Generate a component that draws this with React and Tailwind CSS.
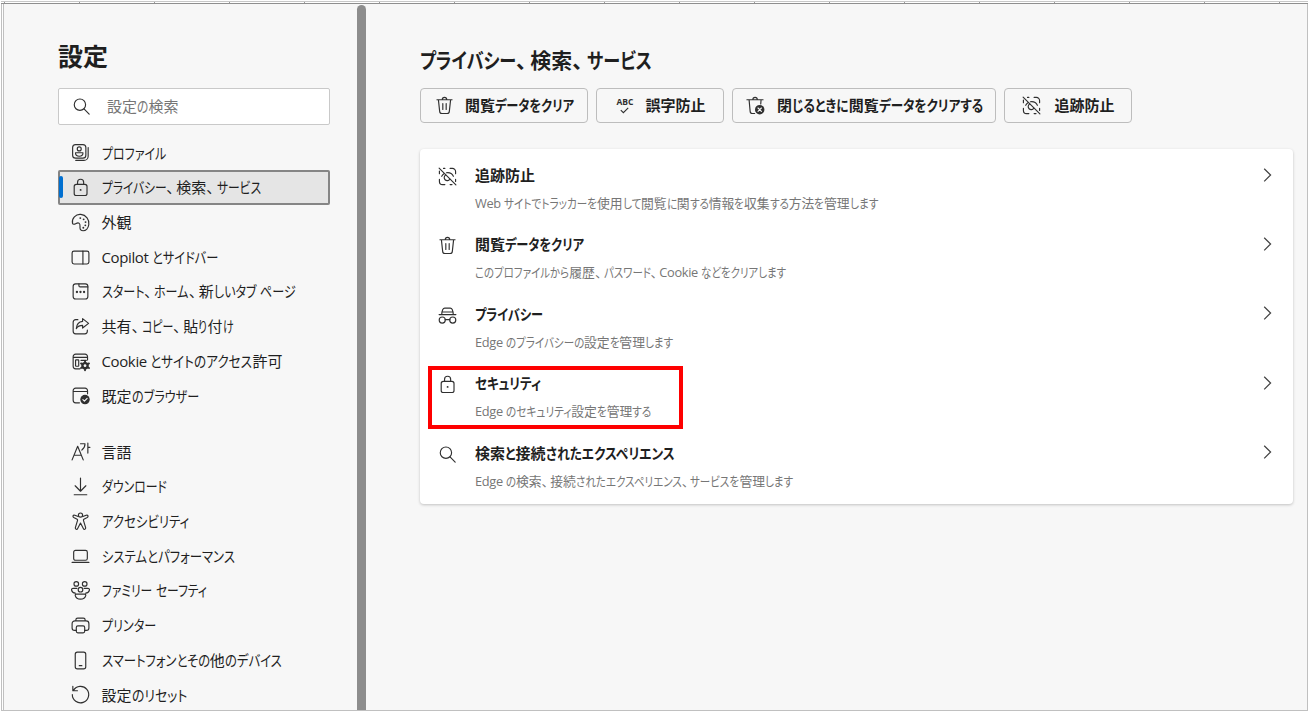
import { useLayoutEffect, useRef } from "react";

const iconPaths = {
    search: <><circle cx="8.5" cy="8.3" r="5.4" /><path d="M12.4 12.3 17.3 17.2" /></>,
    profile: (
        <>
            <rect x="2.5" y="2.5" width="12.6" height="12.8" rx="2.8" />
            <circle cx="8.8" cy="6.6" r="1.9" />
            <path d="M5.3 10.2h7c.4 2-1.2 3.4-3.5 3.4s-3.9-1.4-3.5-3.4zM17.3 5.2v8.3a4 4 0 0 1-4 4H5.5" />
        </>
    ),
    lock: (
        <>
            <rect x="4" y="7" width="12.2" height="10.6" rx="2" />
            <path d="M7.2 7V5a2.9 2.9 0 0 1 5.8 0v2" />
            <circle cx="10.1" cy="12.3" r=".9" fill="currentColor" stroke="none" />
        </>
    ),
    palette: (
        <>
            <path d="M2.4 10.8C1.4 6 5.5 1.8 10.3 2.3c5 .5 8.3 5 7.6 9.7-.5 3.3-2.7 5.900-5.4 5.900-2 0-3-1.300-3-3.100 0-1.700.5-3.300-.9-4.200-1.700-1-2.800.7-4.200 1-1 .2-1.800 0-2-.8z" />
            <g fill="currentColor" stroke="none">
                <circle cx="9.8" cy="5.8" r=".9" /><circle cx="13" cy="7" r=".9" /><circle cx="14.8" cy="9.6" r=".9" />
                <circle cx="14.6" cy="12.7" r=".9" /><circle cx="12.7" cy="15" r=".9" />
            </g>
        </>
    ),
    sidebar: <><rect x="2" y="4" width="16" height="12.2" rx="1.8" /><path d="M12.3 4v12.2" /></>,
    home: (
        <>
            <rect x="3" y="2.7" width="14" height="14.4" rx="2.4" />
            <path d="M8.5 2.8v1.7c0 .7.4 1.1 1.1 1.1H17" />
            <g fill="currentColor" stroke="none">
                <circle cx="6.6" cy="10.5" r="1.1" /><circle cx="10" cy="10.5" r="1.1" /><circle cx="13.4" cy="10.5" r="1.1" />
            </g>
        </>
    ),
    share: (
        <>
            <path d="M7.5 3.5H5.4A2.4 2.4 0 0 0 3 5.9v8.7A2.4 2.4 0 0 0 5.4 17h8.7a2.4 2.4 0 0 0 2.4-2.4v-1.3" />
            <path d="M12 2.5 17.7 7 12 11.5V9c-2.8 0-4.7 1-6 3 .3-3.8 2.4-6.600 6-6.900z" />
        </>
    ),
    cookie: (
        <>
            <path d="M9.5 17H5.4A2.4 2.4 0 0 1 3 14.6V5.4A2.4 2.4 0 0 1 5.4 3h8.9a2.4 2.4 0 0 1 2.4 2.4v3.200M3 6h13.7M10.5 9h5" />
            <rect x="5.3" y="8.5" width="3" height="6" rx=".5" />
            <circle cx="14.3" cy="14" r="2.6" strokeWidth="2" />
            <path strokeWidth="1.8" d="M14.3 9.6v8.8M10.5 11.8l7.6 4.4M10.5 16.2l7.6-4.4" />
            <circle cx="14.3" cy="14" r="1.3" fill="#f7f7f7" stroke="none" />
        </>
    ),
    browser: (
        <>
            <path d="M9 17H5.4A2.4 2.4 0 0 1 3 14.6V5.4A2.4 2.4 0 0 1 5.4 3h8.9a2.4 2.4 0 0 1 2.4 2.4v3M3 6.2h13.7" />
            <circle cx="14.3" cy="13.9" r="4.5" fill="currentColor" stroke="none" />
            <path stroke="#f7f7f7" d="m12.3 14 1.4 1.4 2.6-2.7" />
        </>
    ),
    language: <path d="M2 18 7.3 5l5.3 13M3.8 13.6h7M10 2.6h4.3c0 2.6-.9 4.400-3 6M17 2v9.500M17 6h2" />,
    download: <path d="M10 2v12.3M4.9 9.3l5.1 5.2 5.1-5.2M4 17.9h12" />,
    accessibility: (
        <>
            <circle cx="10" cy="3.9" r="2" />
            <path d="M7.8 5.3 4.6 4c-1.7-.6-2.5 1.4-1 2.2l3.2 1.6c.4.3.5.6.4 1.1l-2.1 7c-.3 1.7 1.6 2.1 2.2.7L10 11.5l2.7 5.1c.6 1.4 2.5 1 2.2-.7l-2.1-7c-.1-.5 0-.8.4-1.1l3.2-1.6c1.5-.8.7-2.8-1-2.2l-3.200 1.300" />
        </>
    ),
    system: <><rect x="3.5" y="4.2" width="13" height="9.4" rx="1.7" /><path d="M2 15.6h16" /></>,
    family: (
        <>
            <circle cx="6" cy="3.7" r="2.2" /><circle cx="14" cy="3.7" r="2.2" /><circle cx="10" cy="9.2" r="2.2" />
            <path d="M6.5 8H3C1.8 8 1.3 8.6 1.5 9.6c.4 1.7 1.6 2.7 3.5 2.9M13.5 8H17c1.2 0 1.7.6 1.5 1.6-.4 1.7-1.6 2.7-3.5 2.9M6 13.5h8c.9 0 1.2.6 1 1.3-.5 2-2.4 3.4-5 3.4s-4.5-1.4-5-3.4c-.2-.7.1-1.3 1-1.3z" />
        </>
    ),
    printer: (
        <>
            <path d="M6 14.7H4.3A2.3 2.3 0 0 1 2 12.4V8.3A2.7 2.7 0 0 1 4.7 5.6h10.6A2.7 2.7 0 0 1 18 8.3v4.1a2.3 2.3 0 0 1-2.3 2.3H14M5.6 5.5V4.6C5.6 3.5 6.2 3 7.3 3h5.4c1.1 0 1.7.5 1.7 1.6v.9" />
            <rect x="6" y="10.3" width="8" height="6.7" rx="1.5" />
        </>
    ),
    phone: <><rect x="5" y="2" width="10" height="16" rx="2" /><path d="M8.8 14.9h2.5" /></>,
    reset: <path d="M3.3 6.1A7.8 7.8 0 1 1 2.2 10M2.7 2.2v4.2h4.4" />,
    trash: <path d="M2.8 4.5h14.4M7.9 4.4c0-1.5.8-2.2 2.1-2.2s2.1.7 2.1 2.2M4.2 4.6l1.2 11c.1 1.2.9 2 2.1 2h5c1.2 0 2-.8 2.1-2l1.2-11M8.4 8.2v5.5M11.6 8.2v5.5" />,
    trashClose: (
        <>
            <path d="M1.8 4.5h15.4M7.5 4.4c0-1.5.8-2.2 2.1-2.2s2.1.7 2.1 2.2M3.9 4.6l1 11c.1 1.2.9 2 2.1 2h2.2M15.3 4.6l-.3 4" />
            <circle cx="14" cy="14" r="4.5" fill="currentColor" stroke="none" />
            <path stroke="#f7f7f7" d="m12.4 12.4 3.2 3.2M15.6 12.4l-3.2 3.2" />
        </>
    ),
    tracking: (
        <>
            <path d="M6.2 2.3h1.3M2.3 7.3V4.8M12.5 2.3h2.2a3 3 0 0 1 3 3v2M17.7 12.7v2M12.5 17.7h1.8M7.5 17.7H5.3a3 3 0 0 1-3-3v-2M2 2l16 16" />
            <path d="M4.500 9.800c.5-1 1.200-1.800 2.100-2.400M9 6.400c2.900-.4 5.500 1 6.600 3.400M8.200 8.600a2.900 2.900 0 1 0 4 4" />
        </>
    ),
    privacy: (
        <>
            <path d="M2 9.1h16M4.5 9c.1-1.7.4-3.5 1-4.8C5.9 3.4 6.5 3 7.4 3h5.2c.9 0 1.5.4 1.9 1.2.6 1.3.9 3.1 1 4.8M4.6 6.7h10.8M7.8 14h4.4" />
            <circle cx="5" cy="14.3" r="2.9" /><circle cx="15" cy="14.3" r="2.9" />
        </>
    ),
};

const Icon = ({ name }) => (
    <svg viewBox="0 0 20 20" className="h-[21px] w-[21px] shrink-0 text-[#303030]" fill="none" stroke="currentColor" strokeWidth="1.1" strokeLinecap="round" strokeLinejoin="round">
        {iconPaths[name]}
    </svg>
);

const SpellIcon = () => (
    <span className="flex h-[21px] w-[21px] shrink-0 flex-col items-center text-[#303030]">
        <span className="mt-[2px] text-[8.5px] leading-[9px] font-bold">ABC</span>
        <svg viewBox="0 0 8 6" className="mt-px h-[7px] w-[9px]" fill="none" stroke="currentColor">
            <path d="M.7 2.7 3 5 7.300.7" />
        </svg>
    </span>
);

// Condenses the kana runs so that the label takes `width` pixels, kanji keep their full width
const Label = ({ text, width, className }) => {
    const ref = useRef(null);

    useLayoutEffect(() => {
        if (!width) return;
        const runs = [...ref.current.children];
        const sum = (list) => list.reduce((total, el) => total + el.offsetWidth, 0);
        const kana = runs.filter((el) => el.dataset.kana);
        const others = runs.filter((el) => !el.dataset.kana);
        const scale = (width - sum(others)) / sum(kana);
        kana.forEach((el) => {
            el.style.marginRight = `${el.offsetWidth * (scale - 1)}px`;
            el.style.transform = `scaleX(${scale})`;
        });
    }, [text, width]);

    return (
        <span ref={ref} className={`block whitespace-pre ${className || ""}`}>
            {text.match(/[\u3040-\u30ff]+|、|[^\u3040-\u30ff、]+/g).map((run, i) => {
                if (run === "、") return <span key={i} className="inline-block w-[0.68em] [font-feature-settings:'halt']">{run}</span>;
                if (/[\u3040-\u30ff]/.test(run)) {
                    return <span key={i} data-kana="1" className="inline-block origin-left [font-feature-settings:'palt']">{run}</span>;
                }
                if (/[a-z]/.test(run)) return <span key={i} className="inline-block tracking-[-0.025em]">{run}</span>;
                return <span key={i} className="inline-block">{run}</span>;
            })}
        </span>
    );
};

const navGroups = [
    [
        { icon: "profile", text: "プロファイル", width: 64 },
        { icon: "lock", text: "プライバシー、検索、サービス", width: 159, active: true },
        { icon: "palette", text: "外観" },
        { icon: "sidebar", text: "Copilot とサイドバー", width: 117 },
        { icon: "home", text: "スタート、ホーム、新しいタブ ページ", width: 194 },
        { icon: "share", text: "共有、コピー、貼り付け", width: 131 },
        { icon: "cookie", text: "Cookie とサイトのアクセス許可", width: 181 },
        { icon: "browser", text: "既定のブラウザー", width: 97 },
    ],
    [
        { icon: "language", text: "言語" },
        { icon: "download", text: "ダウンロード", width: 65 },
        { icon: "accessibility", text: "アクセシビリティ", width: 87 },
        { icon: "system", text: "システムとパフォーマンス", width: 133 },
        { icon: "family", text: "ファミリー セーフティ", width: 105 },
        { icon: "printer", text: "プリンター", width: 54 },
        { icon: "phone", text: "スマートフォンとその他のデバイス", width: 180 },
        { icon: "reset", text: "設定のリセット", width: 85 },
    ],
];

const cards = [
    { icon: "tracking", title: "追跡防止", text: "Web サイトでトラッカーを使用して閲覧に関する情報を収集する方法を管理します", textWidth: 405 },
    { icon: "trash", title: "閲覧データをクリア", titleWidth: 109, text: "このプロファイルから履歴、パスワード、Cookie などをクリアします", textWidth: 312 },
    { icon: "privacy", title: "プライバシー", titleWidth: 68, text: "Edge のプライバシーの設定を管理します", textWidth: 199 },
    { icon: "lock", title: "セキュリティ", titleWidth: 66, text: "Edge のセキュリティ設定を管理する", textWidth: 178, marked: true },
    { icon: "search", title: "検索と接続されたエクスペリエンス", titleWidth: 200, text: "Edge の検索、接続されたエクスペリエンス、サービスを管理します", textWidth: 320 },
];

const NavItem = ({ icon, text, width, active }) => (
    <li className={`relative flex h-[34.7px] items-center rounded-[2px] pl-[11.5px] ${active ? "bg-[#e5e5e5] outline-2 -outline-offset-2 outline-[#858585]" : ""}`}>
        {active && <span className="absolute top-1.5 left-[1px] h-[22px] w-1 rounded-full bg-[#006fd0]" />}
        <Icon name={icon} />
        <Label text={text} width={width} className="ml-[11px]" />
    </li>
);

const ActionButton = ({ icon, text, width, className }) => (
    <button className={`flex h-[35px] items-center justify-center rounded border border-[#bdbdbd] font-semibold ${className}`}>
        {icon === "spell" ? <SpellIcon /> : <Icon name={icon} />}
        <Label text={text} width={width} />
    </button>
);

const CardRow = ({ icon, title, titleWidth, text, textWidth, marked }) => (
    <div className="relative flex h-[69.4px] pt-2 pr-[17px] pl-[17px]">
        {marked && <div className="absolute top-[5px] left-2 h-[63px] w-[255px] border-4 border-[#fe0000]" />}
        <div className="pt-[5px]">
            <Icon name={icon} />
        </div>
        <div className="ml-[17px] grow">
            <Label text={title} width={titleWidth} className="leading-7 font-semibold" />
            <Label text={text} width={textWidth} className="text-[12.8px] leading-7 text-[#767676]" />
        </div>
        <svg viewBox="0 0 18 18" className="mt-[4.5px] h-[18px] w-[18px]" fill="none" stroke="#404040" strokeWidth="1.2">
            <path d="M6.2 2.7 12.6 9l-6.4 6.400" />
        </svg>
    </div>
);

const App = () => {
    return (
        <div className="flex h-[712px] w-[1309px] flex-col overflow-hidden bg-white p-px font-['Open_Sans','Noto_Sans_CJK_JP',sans-serif] text-[15px] text-[#1f1f1f]">
            <div className="h-[3px] shrink-0 border-t border-b border-t-[#c8c8c8] border-b-[#8f8f8f] bg-[repeating-linear-gradient(90deg,transparent_0_3px,#9a9a9a_3px_4px,transparent_4px_75px)]" />
            <div className="flex min-h-0 grow border-r border-b border-l border-[#c0c0c0]">
                <div className="ml-px flex grow border-l border-[#c0c0c0] bg-[#f7f7f7]">
                    <aside className="h-full w-[353px] shrink-0 overflow-hidden pl-[54px]">
                        <h1 className="mt-[32px] text-[25px] leading-10 font-semibold">設定</h1>
                        <div className="mt-[12px] flex h-[37px] w-[272px] items-center rounded-[2px] border border-[#c9c9c9] bg-white pl-3">
                            <Icon name="search" />
                            <Label text="設定の検索" width={71} className="-mt-px ml-[15px] text-[#767676]" />
                        </div>
                        <nav className="mt-[10.6px] w-[272px]">
                            {navGroups.map((group, i) => (
                                <ul key={i} className="mb-[21.5px]">
                                    {group.map((item) => <NavItem key={item.icon} {...item} />)}
                                </ul>
                            ))}
                        </nav>
                    </aside>
                    <div className="mt-px w-[9px] shrink-0 rounded-t-full bg-[#8d8d8d]" />
                    <main className="grow pl-[54px]">
                        <h2 className="mt-[40px] text-[21px] leading-8 font-semibold">
                            <Label text="プライバシー、検索、サービス" width={231} />
                        </h2>
                        <div className="mt-[12px] flex gap-2">
                            <ActionButton icon="trash" text="閲覧データをクリア" width={109} className="w-[168px] gap-2.5" />
                            <ActionButton icon="spell" text="誤字防止" className="w-[128px] gap-2.5" />
                            <ActionButton icon="trashClose" text="閉じるときに閲覧データをクリアする" width={205} className="w-[264px] gap-[11px]" />
                            <ActionButton icon="tracking" text="追跡防止" className="w-[128px] gap-3" />
                        </div>
                        <section className="mt-[26px] w-[873px] rounded bg-white py-1 shadow-[0_1px_3px_rgba(0,0,0,0.22)]">
                            {cards.map((card) => <CardRow key={card.title} {...card} />)}
                        </section>
                    </main>
                </div>
            </div>
        </div>
    );
};

export default App;
